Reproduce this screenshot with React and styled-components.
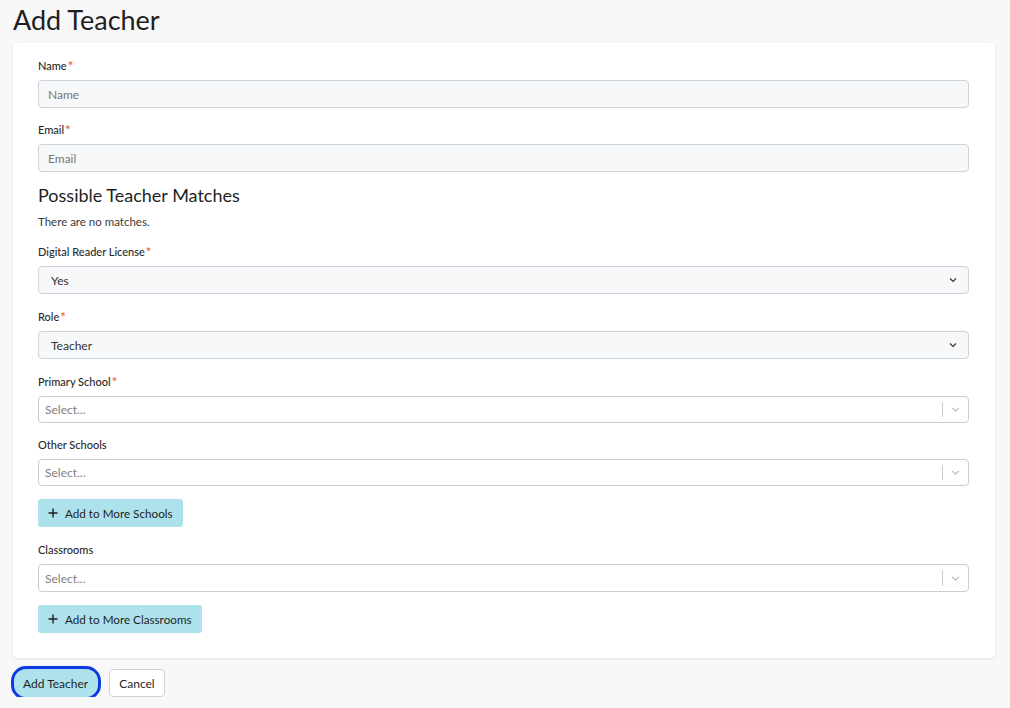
import React from "react";
import styled, { createGlobalStyle } from "styled-components";

const GlobalStyle = createGlobalStyle`
  html, body {
    margin: 0;
    padding: 0;
    background: #f8f8f8;
    font-family: Lato, "Open Sans", sans-serif;
    color: #222;
  }
`;

const Page = styled.div`
  padding: 0 15px 0 13px;
`;

const Title = styled.h1`
  margin: 0;
  padding-top: 3px;
  font-size: 27px;
  line-height: 34px;
  font-weight: 400;
  color: #1f1f1f;
  margin-bottom: 6px;
`;

const Card = styled.div`
  background: #fff;
  border-radius: 4px;
  box-shadow: 0 1px 3px rgba(0, 0, 0, 0.1);
  padding: 16px 26px 25px 25px;
`;

const Field = styled.div`
  margin-bottom: ${(p) => p.$gap ?? 15}px;
`;

const Label = styled.div`
  font-size: 11px;
  line-height: 14px;
  font-weight: 500;
  color: #2a2a2a;
  margin-bottom: 7px;
`;

const Star = styled.span`
  color: #e8562e;
  font-size: 13px;
  line-height: 10px;
  margin-left: 1px;
  vertical-align: -1px;
`;

const TextInput = styled.input`
  display: block;
  box-sizing: border-box;
  width: 100%;
  height: 28px;
  padding: 0 9px;
  border: 1px solid #cdd3da;
  border-radius: 4px;
  background: #f7f8f9;
  font-family: inherit;
  font-size: 12px;
  color: #333;
  outline: none;
  &::placeholder {
    color: #777;
  }
`;

const NativeSelect = styled.div`
  display: flex;
  align-items: center;
  justify-content: space-between;
  box-sizing: border-box;
  height: 28px;
  padding: 0 10px 0 12px;
  border: 1px solid #cdd3da;
  border-radius: 4px;
  background: #f7f8f9;
  font-size: 12px;
  color: #333;
`;

const ComboBox = styled.div`
  display: flex;
  align-items: center;
  box-sizing: border-box;
  height: ${(p) => p.$height ?? 27}px;
  border: 1px solid #ccc;
  border-radius: 4px;
  background: #fff;
  font-size: 12px;
`;

const Placeholder = styled.span`
  flex: 1;
  padding-left: 6px;
  color: #808080;
`;

const Separator = styled.span`
  width: 1px;
  align-self: stretch;
  margin: 5px 0;
  background: #ccc;
`;

const Indicator = styled.span`
  display: flex;
  align-items: center;
  justify-content: center;
  width: 25px;
`;

const Heading = styled.h2`
  margin: 12px 0 7px;
  font-size: 18px;
  line-height: 23px;
  font-weight: 400;
  color: #1f1f1f;
`;

const Note = styled.p`
  margin: 0 0 16px;
  font-size: 11.5px;
  line-height: 15px;
  color: #3a3a3a;
`;

const AddButton = styled.button`
  display: inline-flex;
  align-items: center;
  gap: 7px;
  height: 28px;
  padding: 0 10px 0 10px;
  border: none;
  border-radius: 3px;
  background: #ade2ec;
  font-family: inherit;
  font-size: 11.7px;
  color: #1f1f1f;
  margin-bottom: ${(p) => p.$gap ?? 0}px;
`;

const Actions = styled.div`
  display: flex;
  align-items: center;
  gap: 11px;
  margin-top: 11px;
  padding-left: 1px;
`;

const PrimaryButton = styled.button`
  height: 28px;
  padding: 0 10px 0 9px;
  border: none;
  border-radius: 12px;
  background: #ade2ec;
  outline: 3px solid #0a3be2;
  outline-offset: 0;
  font-family: inherit;
  font-size: 12px;
  color: #1f1f1f;
`;

const CancelButton = styled.button`
  height: 28px;
  padding: 0 9px;
  border: 1px solid #cdd3da;
  border-radius: 4px;
  background: #fff;
  font-family: inherit;
  font-size: 12px;
  color: #1f1f1f;
`;

const Chevron = ({ color = "#333", size = 10 }) => (
  <svg width={size} height={size} viewBox="0 0 10 10" fill="none">
    <path d="M2 3.5 L5 6.5 L8 3.5" stroke={color} strokeWidth="1.1" />
  </svg>
);

const Plus = () => (
  <svg width="10" height="10" viewBox="0 0 10 10">
    <path d="M5 0.5 V9.5 M0.5 5 H9.5" stroke="#1f1f1f" strokeWidth="1.4" />
  </svg>
);

const Required = () => <Star>*</Star>;

const Combo = ({ height }) => (
  <ComboBox $height={height}>
    <Placeholder>Select...</Placeholder>
    <Separator />
    <Indicator>
      <Chevron color="#bbb" size={11} />
    </Indicator>
  </ComboBox>
);

export default function App() {
  return (
    <Page>
      <GlobalStyle />
      <Title>Add Teacher</Title>
      <Card>
        <Field>
          <Label>
            Name<Required />
          </Label>
          <TextInput placeholder="Name" />
        </Field>
        <Field $gap={0}>
          <Label>
            Email<Required />
          </Label>
          <TextInput placeholder="Email" />
        </Field>
        <Heading>Possible Teacher Matches</Heading>
        <Note>There are no matches.</Note>
        <Field $gap={16}>
          <Label>
            Digital Reader License<Required />
          </Label>
          <NativeSelect>
            Yes
            <Chevron />
          </NativeSelect>
        </Field>
        <Field $gap={16}>
          <Label>
            Role<Required />
          </Label>
          <NativeSelect>
            Teacher
            <Chevron />
          </NativeSelect>
        </Field>
        <Field>
          <Label>
            Primary School<Required />
          </Label>
          <Combo />
        </Field>
        <Field $gap={13}>
          <Label>Other Schools</Label>
          <Combo />
        </Field>
        <AddButton $gap={16}>
          <Plus />
          Add to More Schools
        </AddButton>
        <Field $gap={13}>
          <Label>Classrooms</Label>
          <Combo height={28} />
        </Field>
        <AddButton>
          <Plus />
          Add to More Classrooms
        </AddButton>
      </Card>
      <Actions>
        <PrimaryButton>Add Teacher</PrimaryButton>
        <CancelButton>Cancel</CancelButton>
      </Actions>
    </Page>
  );
}
